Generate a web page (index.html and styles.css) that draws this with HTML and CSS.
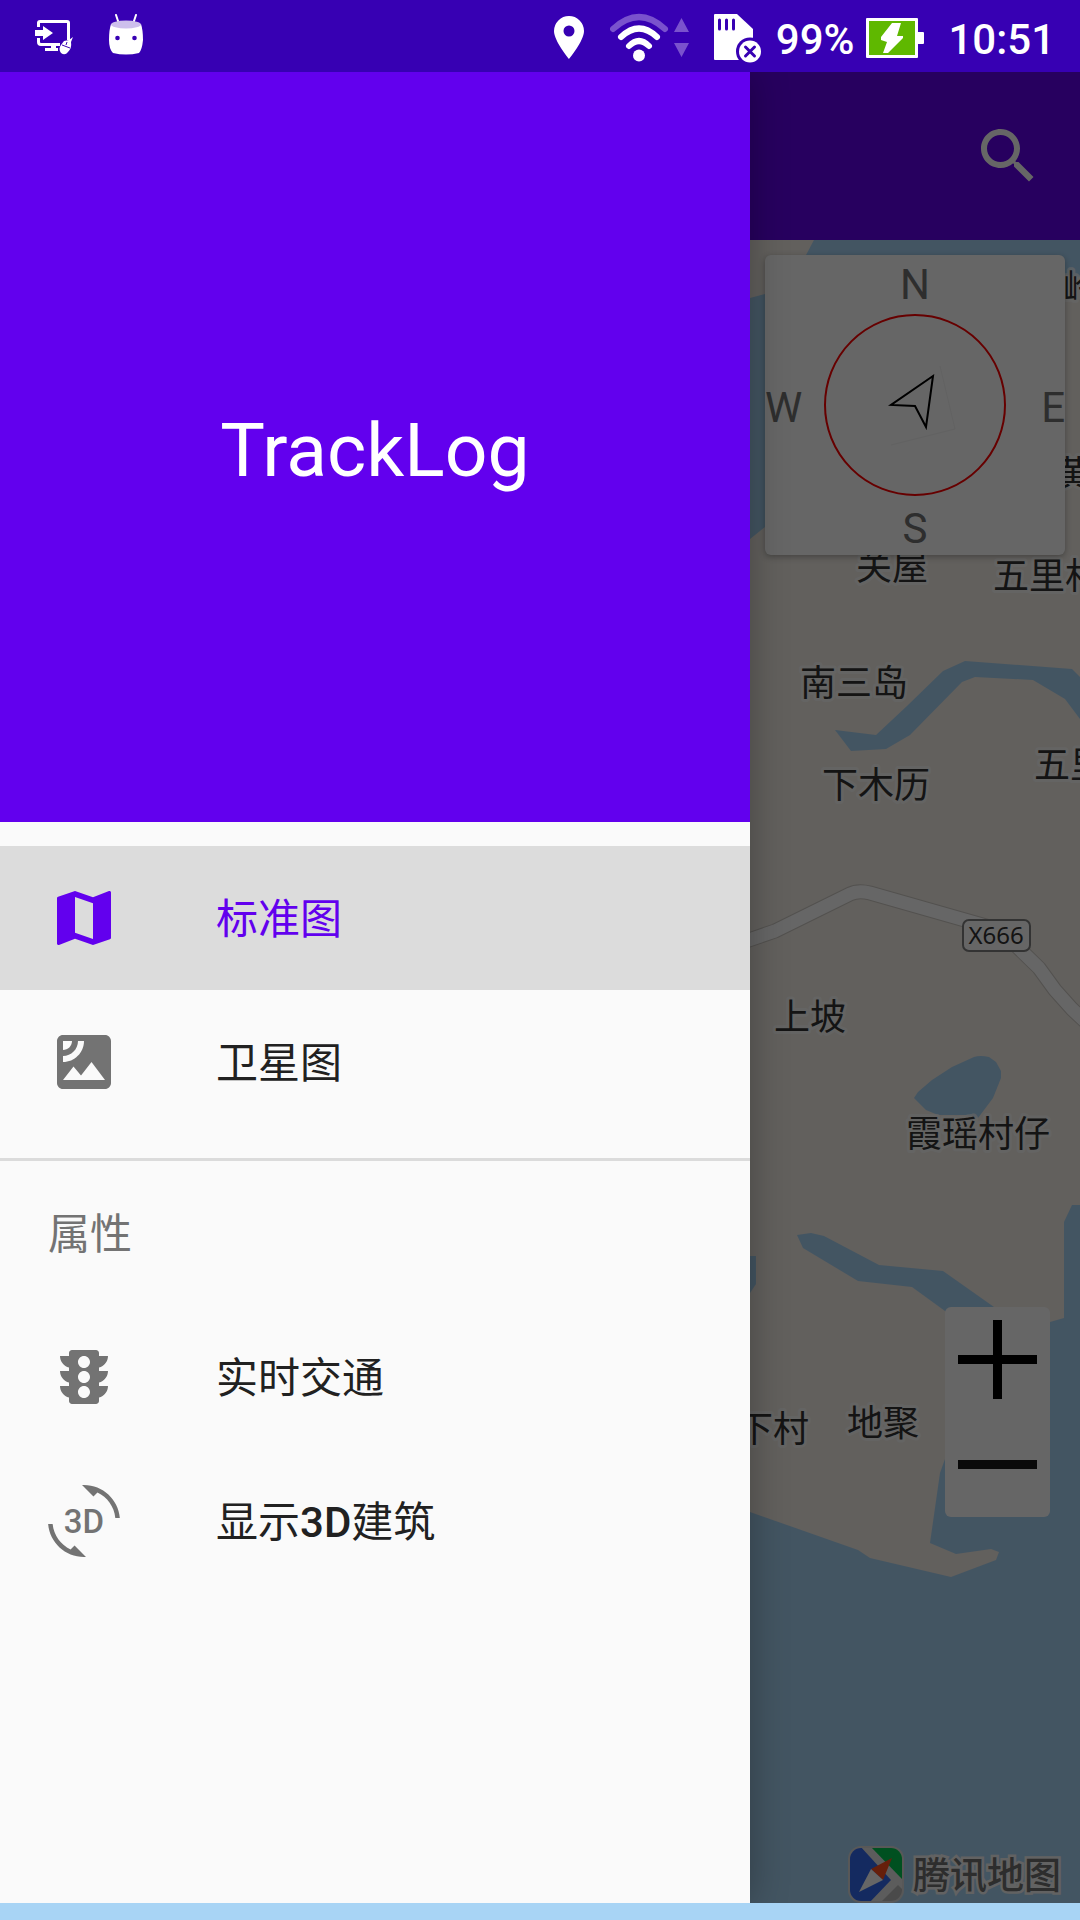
FILE: index.html
```html
<!DOCTYPE html>
<html lang="zh-CN">
<head>
<meta charset="utf-8">
<meta name="viewport" content="width=device-width, initial-scale=1">
<title>TrackLog</title>
<link rel="stylesheet" href="styles.css">
</head>
<body>
<header class="status">
  <div class="status-notices">
    <svg width="38" height="38" viewBox="35 19 38 38" aria-hidden="true">
      <path d="M38.500 28v-4q0-1.500 1.500-1.500h27q1.500 0 1.500 1.500v17M38.500 39v4q0 2.500 2.500 2.500h19" fill="none" stroke="#fff" stroke-width="3"/>
      <path d="M35 31h8v-4l10 7-10 7v-4h-8zM51 46h5v3h2v3H45v-3h6z" fill="#fff"/>
      <path d="M64 42l5-1 4-3-2 5q1 6-3 10-3 4-7 1-3-4 0-8z" fill="#fff"/>
      <path d="M62 46l8 3M67 43l-1 3" stroke="#3700b3" stroke-width="1" fill="none"/>
    </svg>
    <svg width="34" height="42" viewBox="109 13 34 42" aria-hidden="true">
      <path d="M116 14l3 9M136 14l-3 9" stroke="#fff" stroke-width="2" stroke-linecap="round"/>
      <path d="M111 23q15 6 30 0 2 6 2 16-1 10-4 13-13 3-26 0-4-4-4-13 0-10 2-16z" fill="#fff"/>
      <ellipse cx="126" cy="23.500" rx="15" ry="4" fill="#cdbfec"/>
      <circle cx="117.500" cy="37" r="2.300" fill="#3700b3"/><circle cx="134.500" cy="37" r="2.300" fill="#3700b3"/>
    </svg>
  </div>
  <div class="status-system">
    <svg width="30" height="44" viewBox="554 16 30 44" fill="#fff" aria-hidden="true">
      <path fill-rule="evenodd" d="M569 16a15 15 0 0 1 15 15c0 10-15 28-15 28s-15-18-15-28a15 15 0 0 1 15-15zm0 9.500a5.500 5.500 0 1 0 0 11 5.500 5.500 0 0 0 0-11z"/>
    </svg>
    <svg class="wifi" width="80" height="50" viewBox="610 13 80 50" fill="none" stroke-width="6" stroke-linecap="round" aria-hidden="true">
      <path d="M613 29q26-24 52 0" stroke="#7a52cd"/>
      <path d="M621 37q18-17 36 0M629 46q10-10 20 0" stroke="#fff"/>
      <circle cx="639" cy="55.500" r="6" fill="#fff"/>
      <path d="M681.500 18l7.500 14h-15zM674 43h15l-7.500 14z" fill="#7a52cd"/>
    </svg>
    <svg class="sdcard" width="48" height="50" viewBox="714 12 48 50" aria-hidden="true">
      <path d="M715 13h22l16 15v31h-38q-1 0-1-1V14q0-1 1-1z" fill="#fff"/>
      <path d="M719.500 19v9M726.500 19v9M733.500 19v9" stroke="#3700b3" stroke-width="3" stroke-linecap="round"/>
      <circle cx="750" cy="50.500" r="14" fill="#3700b3"/><circle cx="750" cy="50.500" r="11" fill="#fff"/>
      <path d="M745.500 46l9 9m0-9l-9 9" stroke="#3700b3" stroke-width="3" stroke-linecap="round"/>
    </svg>
    <span class="battery-level">99%</span>
    <svg class="battery" width="58" height="40" viewBox="867 18 58 40" aria-hidden="true">
      <path d="M868 18h50q1 0 1 1v13h5q1 0 1 1v10q0 1-1 1h-5v13q0 1-1 1h-50q-1 0-1-1V19q0-1 1-1z" fill="#fff"/>
      <path d="M870 21h46v34h-46z" fill="#5fb800"/>
      <path d="M893 23h9l-4 13h6v2l-15 15h-5l4-11-6-2v-3z" fill="#fff"/>
    </svg>
    <time class="clock">10:51</time>
  </div>
</header>

<main class="app">
  <div class="toolbar">
    <button class="search" type="button" aria-label="搜索">
      <svg width="72" height="72" viewBox="0 0 24 24" fill="#fff" aria-hidden="true"><path d="M15.500 14h-.790l-.280-.270C15.410 12.590 16 11.110 16 9.500 16 5.910 13.090 3 9.500 3S3 5.910 3 9.500 5.910 16 9.500 16c1.610 0 3.090-.590 4.230-1.570l.270.280v.790l5 4.990L20.490 19l-4.990-5zm-6 0C7.010 14 5 11.990 5 9.500S7.010 5 9.500 5 14 7.010 14 9.500 11.990 14 9.500 14z"/></svg>
    </button>
  </div>

  <section class="map" aria-label="地图">
    <svg class="map-canvas" viewBox="750 240 330 1663" preserveAspectRatio="xMaxYMin slice">
      <g class="land">
        <path d="M750 240H814L806 255L780 285L765 294L750 298Z"/>
        <path d="M750 539L765 527L830 460L1000 265L1080 277V1205H1072L1064 1222V1318L1050 1322L1010 1318L994 1307L943 1271L879 1265L824 1236L811 1233L797 1235L803 1248L858 1281L912 1287L945 1311L965 1325L965 1400L945 1459L940 1473L930 1543L956 1554L991 1549L999 1552L996 1560L951 1577L870 1558L858 1550L750 1512Z"/>
      </g>
      <g class="water">
        <path d="M835 730L876 735L907 706L943 671L965 661L1072 669L1080 677V719L1065 699L1033 680L975 677L962 682L910 735L886 749L851 751Z"/>
        <path d="M914 1098L918 1092L932 1080L952 1067L974 1057Q980 1055 989 1057L996 1062L1001 1071V1078L993 1098L978 1118L966 1115L938 1115L926 1110Z"/>
        <path d="M750 1256H756V1284L750 1293Z"/>
      </g>
      <path class="road-edge" d="M740 943L775 931L850 894Q858 890 870 893L1000 930L1039 968L1055 990L1072 1009L1090 1026"/>
      <path class="road" d="M740 943L775 931L850 894Q858 890 870 893L1000 930L1039 968L1055 990L1072 1009L1090 1026"/>
      <rect class="road-sign" x="963" y="920" width="67" height="31" rx="6"/>
      <text class="road-name" x="996" y="944">X666</text>
      <g class="place">
        <text x="1063" y="301">岭头</text>
        <text x="1055" y="487">黄屋</text>
        <text x="856" y="580">关屋</text>
        <text x="993" y="589">五里村</text>
        <text x="800" y="696">南三岛</text>
        <text x="1034" y="778">五里</text>
        <text x="822" y="798">下木历</text>
        <text x="774" y="1030">上坡</text>
        <text x="906" y="1147">霞瑶村仔</text>
        <text x="737" y="1442">下村</text>
        <text x="847" y="1436">地聚</text>
      </g>
    </svg>

    <div class="compass">
      <span class="north">N</span>
      <span class="west">W</span>
      <svg class="dial" width="182" height="182" viewBox="824 314 182 182" fill="none" aria-hidden="true">
        <circle cx="915" cy="405" r="90" stroke="#f00" stroke-width="2"/>
        <path d="M940 366L955 429L891 445" stroke="#f5f5f5"/>
        <path d="M933 376L891 405L915 406L926 427Z" stroke="#000" stroke-width="2"/>
      </svg>
      <span class="east">E</span>
      <span class="south">S</span>
    </div>

    <div class="zoom">
      <button type="button" aria-label="放大"><svg width="105" height="105" viewBox="0 0 105 105" aria-hidden="true"><path d="M13 52.500h79M52.500 13v79" stroke="#000" stroke-width="9"/></svg></button>
      <button type="button" aria-label="缩小"><svg width="105" height="105" viewBox="0 0 105 105" aria-hidden="true"><path d="M13 52.500h79" stroke="#1a1a1a" stroke-width="9"/></svg></button>
    </div>

    <div class="credit">
      <svg width="56" height="57" viewBox="0 0 56 57" aria-hidden="true">
        <defs><clipPath id="tile"><rect x="2" y="2" width="52" height="53" rx="11"/></clipPath></defs>
        <rect width="56" height="57" rx="13" fill="#ddd"/>
        <g clip-path="url(#tile)">
          <path d="M0 0h56v57H0z" fill="#e6e6e6"/>
          <path d="M0 0h12l31 34-22 23H0z" fill="#3269f0"/>
          <path d="M22 0h34v35z" fill="#00c850"/>
          <path d="M33 56l17-17 8 8v10z" fill="#b9b9b9"/>
        </g>
        <path d="M23 23L44 12 35 34z" fill="#ff4e1c"/>
        <path d="M23 23l12 11-24 12z" fill="#fff"/>
      </svg>
      <span class="credit-name">腾讯地图</span>
    </div>
  </section>

  <div class="scrim"></div>

  <aside class="drawer">
    <h1 class="brand">TrackLog</h1>
    <nav class="menu">
      <div class="group">
        <button class="item selected" type="button" aria-pressed="true">
          <svg class="icon" viewBox="0 0 24 24" aria-hidden="true"><path d="M20.500 3l-.160.030L15 5.100 9 3 3.360 4.900c-.210.070-.360.250-.360.480V20.500c0 .280.220.500.500.500l.160-.030L9 18.900l6 2.100 5.640-1.900c.210-.070.360-.250.360-.480V3.500c0-.280-.220-.500-.500-.500zM15 19l-6-2.110V5l6 2.110V19z"/></svg>
          <span class="label">标准图</span>
        </button>
        <button class="item" type="button" aria-pressed="false">
          <svg class="icon" viewBox="0 0 24 24" aria-hidden="true"><path d="M19 3H5c-1.100 0-2 .900-2 2v14c0 1.100.900 2 2 2h14c1.100 0 2-.900 2-2V5c0-1.100-.900-2-2-2zM5 4.990h3C8 6.650 6.660 8 5 8V4.990zM5 12v-2c2.760 0 5-2.250 5-5.010h2C12 8.860 8.870 12 5 12zm0 6l3.500-4.500 2.500 3.010L14.500 12l4.500 6H5z"/></svg>
          <span class="label">卫星图</span>
        </button>
      </div>
      <div class="group properties">
        <h2 class="caption">属性</h2>
        <button class="item" type="button" aria-pressed="false">
          <svg class="icon" viewBox="0 0 24 24" aria-hidden="true"><path d="M20 10h-3V8.860c1.720-.450 3-2 3-3.860h-3V4c0-.550-.450-1-1-1H8c-.550 0-1 .450-1 1v1H4c0 1.860 1.280 3.410 3 3.860V10H4c0 1.860 1.280 3.410 3 3.860V15H4c0 1.860 1.280 3.410 3 3.860V20c0 .550.450 1 1 1h8c.550 0 1-.450 1-1v-1.140c1.720-.450 3-2 3-3.860h-3v-1.140c1.720-.450 3-2 3-3.860zm-8 9c-1.110 0-2-.900-2-2s.890-2 2-2c1.100 0 2 .900 2 2s-.890 2-2 2zm0-5c-1.110 0-2-.900-2-2s.890-2 2-2c1.100 0 2 .900 2 2s-.890 2-2 2zm0-5c-1.110 0-2-.900-2-2 0-1.110.890-2 2-2 1.100 0 2 .890 2 2 0 1.100-.890 2-2 2z"/></svg>
          <span class="label">实时交通</span>
        </button>
        <button class="item" type="button" aria-pressed="false">
          <svg class="icon" viewBox="0 0 72 72" aria-hidden="true"><path transform="scale(3)" d="M7.520 21.480C4.250 19.940 1.910 16.760 1.550 13H.050C.560 19.160 5.710 24 12 24l.660-.030-3.810-3.810-1.330 1.320zM12 0l-.660.030 3.810 3.810 1.330-1.330c3.270 1.550 5.610 4.720 5.960 8.480h1.500C23.440 4.840 18.290 0 12 0z"/><text class="icon-text" x="36" y="48">3D</text></svg>
          <span class="label">显示<b class="latin">3D</b>建筑</span>
        </button>
      </div>
    </nav>
  </aside>
</main>
<div class="system-nav"></div>
</body>
</html>
```
FILE: styles.css
```css
* {
  box-sizing: border-box;
}

body {
  margin: 0;
  min-height: 100vh;
  display: grid;
  grid-template-rows: 72px 1fr 17px;
  font-family: Roboto, "Noto Sans CJK SC", sans-serif;
  font-size: 42px;
  background: #a8d4f5;
}

button {
  border: 0;
  padding: 0;
  background: none;
  font: inherit;
  color: inherit;
  cursor: pointer;
}

svg {
  display: block;
  flex: none;
}

/* Status bar */

.status {
  display: flex;
  justify-content: space-between;
  align-items: center;
  padding: 4px 25px 0 35px;
  background: #3700b3;
  color: #fff;
  font-weight: 500;
}

.status-notices,
.status-system {
  display: flex;
  align-items: center;
}

.status-notices {
  gap: 36px;
  padding-bottom: 6px;
}

.status-notices svg:first-child {
  margin-top: 4px;
}

.wifi {
  margin-left: 26px;
}

.sdcard {
  margin-left: 24px;
}

.battery-level,
.clock {
  padding-top: 2px;
}

.battery-level {
  margin: 0 12px 0 14px;
}

.clock {
  margin-left: 24px;
}

/* Map screen */

.app {
  position: relative;
  display: flex;
  flex-direction: column;
  overflow: hidden;
}

.toolbar {
  height: 168px;
  display: flex;
  align-items: center;
  justify-content: flex-end;
  padding-right: 36px;
  background: #6200ee;
}

.map {
  position: relative;
  flex: 1;
  display: flex;
  justify-content: flex-end;
  background: #a8d4f5;
}

.map-canvas {
  width: 330px;
}

.land {
  fill: #f4efe8;
}

.water {
  fill: #a8d4f5;
}

.road-edge,
.road {
  fill: none;
  stroke: #cfcbc5;
  stroke-width: 15px;
  stroke-linejoin: round;
}

.road {
  stroke: #fff;
  stroke-width: 13px;
}

.road-sign {
  fill: #fff;
  stroke: #7f7f7f;
  stroke-width: 2px;
}

.road-name {
  font-family: "Noto Sans", sans-serif;
  font-size: 24px;
  text-anchor: middle;
  fill: #333;
}

.place {
  font-family: "Noto Sans CJK SC", sans-serif;
  font-size: 36px;
  fill: #333;
  stroke: #fff;
  stroke-opacity: 0.7;
  stroke-width: 6px;
  stroke-linejoin: round;
  paint-order: stroke;
}

.compass {
  position: absolute;
  top: 15px;
  right: 15px;
  width: 300px;
  height: 300px;
  display: grid;
  grid-template: 58px 1fr 54px / 1fr 1fr;
  align-items: center;
  border-radius: 6px;
  background: #fff;
  color: #737373;
  box-shadow: 0 2px 6px rgba(0, 0, 0, 0.3);
}

.north,
.south {
  grid-column: 1 / -1;
  text-align: center;
}

.north {
  grid-row: 1;
}

.south {
  grid-row: 3;
}

.west,
.east {
  grid-row: 2;
}

.west {
  grid-column: 1;
}

.east {
  grid-column: 2;
  text-align: right;
}

.dial {
  grid-area: 1 / 1 / -1 / -1;
  justify-self: center;
}

.zoom {
  position: absolute;
  right: 30px;
  bottom: 386px;
  display: flex;
  flex-direction: column;
  border-radius: 6px;
  background: #fff;
}

.credit {
  position: absolute;
  right: 19px;
  bottom: 0;
  display: flex;
  align-items: center;
  gap: 9px;
}

.credit-name {
  padding-top: 4px;
  font-size: 37px;
  font-weight: 500;
  line-height: 53px;
  color: #707070;
  -webkit-text-stroke: 5px #f5f5f5;
  paint-order: stroke;
}

.scrim {
  position: absolute;
  inset: 0;
  background: rgba(0, 0, 0, 0.6);
}

/* Navigation drawer */

.drawer {
  position: absolute;
  top: 0;
  bottom: 0;
  left: 0;
  width: min(750px, 100% - 168px);
  background: #fafafa;
  color: #212121;
  box-shadow: 0 0 36px rgba(0, 0, 0, 0.3);
}

.brand {
  margin: 0;
  padding-top: 6px;
  aspect-ratio: 1;
  display: flex;
  align-items: center;
  justify-content: center;
  background: #6200ee;
  color: #fff;
  font-size: 75px;
  font-weight: 400;
}

.group {
  padding: 24px 0;
}

.properties {
  padding-top: 0;
  border-top: 3px solid #dbdbdb;
}

.caption {
  margin: 0;
  padding: 4px 48px 0;
  font-size: 42px;
  font-weight: 400;
  line-height: 140px;
  color: #737373;
}

.item {
  width: 100%;
  height: 144px;
  display: flex;
  align-items: center;
  gap: 96px;
  padding: 0 48px;
  line-height: 60px;
}

.label {
  padding-top: 4px;
}

.icon {
  width: 72px;
  height: 72px;
  fill: #737373;
}

.selected {
  background: #dcdcdc;
  color: #6200ee;
}

.selected .icon {
  fill: #6200ee;
}

.icon-text {
  font-size: 33px;
  font-weight: 500;
  text-anchor: middle;
}

.latin {
  font-weight: 500;
}
```
